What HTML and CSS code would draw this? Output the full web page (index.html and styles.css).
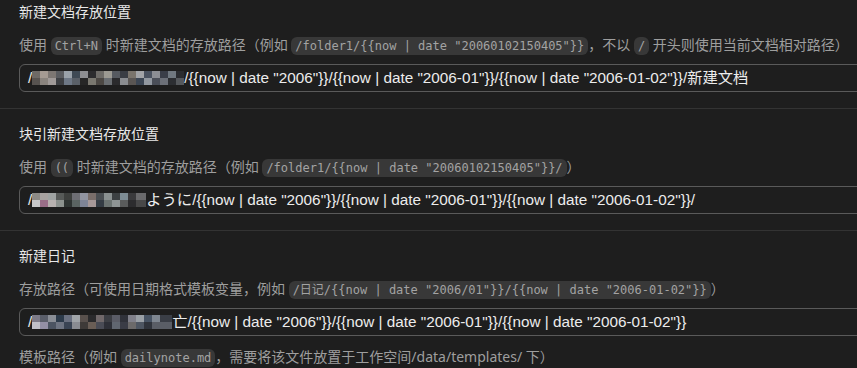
FILE: index.html
```html
<!DOCTYPE html>
<html lang="zh-CN">
<head>
  <meta charset="UTF-8" />
  <meta name="viewport" content="width=device-width, initial-scale=1.0"/>
  <title>设置 - 文档</title>
  <link rel="stylesheet" href="styles.css">
</head>
<body>
  <div class="settings">
    <div class="item">
      <div class="item-title">新建文档存放位置</div>
      <div class="item-desc">使用 <code>Ctrl+N</code> 时新建文档的存放路径（例如 <code>/folder1/{{now | date "20060102150405"}}</code>，不以 <code>/</code> 开头则使用当前文档相对路径）</div>
      <div class="item-input">/<span class="mosaic m1"></span>/{{now | date "2006"}}/{{now | date "2006-01"}}/{{now | date "2006-01-02"}}/新建文档</div>
    </div>

    <div class="item">
      <div class="item-title">块引新建文档存放位置</div>
      <div class="item-desc">使用 <code>((</code> 时新建文档的存放路径（例如 <code>/folder1/{{now | date "20060102150405"}}/</code>）</div>
      <div class="item-input">/<span class="mosaic m2"></span>ように/{{now | date "2006"}}/{{now | date "2006-01"}}/{{now | date "2006-01-02"}}/</div>
    </div>

    <div class="item last">
      <div class="item-title">新建日记</div>
      <div class="item-desc">存放路径（可使用日期格式模板变量，例如 <code>/日记/{{now | date "2006/01"}}/{{now | date "2006-01-02"}}</code>）</div>
      <div class="item-input">/<span class="mosaic m3"></span>亡/{{now | date "2006"}}/{{now | date "2006-01"}}/{{now | date "2006-01-02"}}</div>
      <div class="item-desc after">模板路径（例如 <code>dailynote.md</code>，需要将该文件放置于工作空间/data/templates/ 下）</div>
    </div>
  </div>
</body>
</html>
```

FILE: styles.css
```css
body {
  margin: 0;
  background: #1e1e1e;
  overflow: hidden;
  font-family: "Noto Sans", "Noto Sans CJK SC", sans-serif;
}
.settings {
  margin-top: -13px;
}
.item {
  padding: 15px 0 16px 19px;
  border-bottom: 1px solid #333333;
}
.item.last {
  border-bottom: none;
}
.item-title {
  font-size: 14px;
  line-height: 20px;
  color: #e8e8e8;
  margin-bottom: 12px;
}
.item-desc {
  font-size: 14px;
  line-height: 22px;
  color: #9e9e9e;
  white-space: nowrap;
  margin-bottom: 8px;
}
.item-desc.after {
  margin-top: 10px;
}
code {
  font-family: "DejaVu Sans Mono", "Noto Sans CJK SC", monospace;
  font-size: 12px;
  line-height: 15px;
  padding: 2px 4px;
  border-radius: 6px;
  background: #383838;
  color: #a3a3a3;
}
.item-input {
  width: 900px;
  height: 28px;
  box-sizing: border-box;
  border: 1px solid #5a5a5a;
  border-radius: 6px;
  padding: 0 8px;
  font-family: "Liberation Sans", "Noto Sans CJK SC", sans-serif;
  font-size: 15.3px;
  line-height: 26px;
  color: #ececec;
  white-space: nowrap;
}
.mosaic {
  display: inline-block;
  height: 14px;
  vertical-align: -2px;
  background-size: 100% 7px;
  background-repeat: no-repeat;
  background-position: 0 0, 0 7px;
}
.m1 {
  width: 152px;
  background-image:
    linear-gradient(to right, #6e6a66 0 8px, #a59b93 8px 16px, #7d7773 16px 24px, #5a5c60 24px 32px, #9aa2aa 32px 40px, #3f4a55 40px 48px, #8e8f92 48px 56px, #2c2c2e 56px 64px, #6e6c68 64px 72px, #9c9a92 72px 80px, #565a60 80px 88px, #3a3d44 88px 96px, #7a746c 96px 104px, #a2a4a8 104px 112px, #4a5260 112px 120px, #8c8e94 120px 128px, #3a3e48 128px 136px, #707880 136px 144px, #2a2c30 144px 152px),
    linear-gradient(to right, #575350 0 8px, #8a847e 8px 16px, #a09a98 16px 24px, #3e4044 24px 32px, #6e7886 32px 40px, #5a6068 40px 48px, #262626 48px 56px, #7a7870 56px 64px, #4c4844 64px 72px, #6a6e72 72px 80px, #2a2a2c 80px 88px, #8a8c90 88px 96px, #5a5654 96px 104px, #3c4654 104px 112px, #9298a0 112px 120px, #4a4e58 120px 128px, #6c7078 128px 136px, #2c2e32 136px 144px, #55585c 144px 152px);
}
.m2 {
  width: 114px;
  background-image:
    linear-gradient(to right, #8c8a86 0 8px, #a7a2a0 8px 16px, #9fa3a2 16px 24px, #575a58 24px 32px, #3e403e 32px 40px, #6e6e74 40px 48px, #9194a0 48px 56px, #7a6e6a 56px 64px, #4a4e52 64px 72px, #8a9090 72px 80px, #3c4042 80px 88px, #7d8c94 88px 96px, #3a3a3c 96px 104px, #6a6a6c 104px 114px),
    linear-gradient(to right, #c8c8ca 0 8px, #9a6e88 8px 16px, #b8b2b0 16px 24px, #8c928e 24px 32px, #2e3432 32px 40px, #5a6462 40px 48px, #7e8496 48px 56px, #a69898 56px 64px, #343c44 64px 72px, #6c7472 72px 80px, #8e9494 80px 88px, #5a5c5c 88px 96px, #2c2c2e 96px 104px, #484848 104px 114px);
}
.m3 {
  width: 140px;
  background-image:
    linear-gradient(to right, #7c7a88 0 8px, #5a5e6a 8px 16px, #8a8e96 16px 24px, #2c3a4a 24px 32px, #6a7080 32px 40px, #a0a4a8 40px 48px, #58504c 48px 56px, #2a2a2c 56px 64px, #70686a 64px 72px, #3c3e44 72px 80px, #5a5c66 80px 88px, #30323a 88px 96px, #80808a 96px 104px, #9aa0a6 104px 112px, #485464 112px 120px, #7e8690 120px 128px, #3a3e46 128px 140px),
    linear-gradient(to right, #c0c0c8 0 8px, #9490a6 8px 16px, #4c5462 16px 24px, #6e7482 24px 32px, #3a4454 32px 40px, #8a8c92 40px 48px, #3e3a38 48px 56px, #6a5e56 56px 64px, #4a4c56 64px 72px, #2e3038 72px 80px, #606670 80px 88px, #3a3c46 88px 96px, #6c6a6a 96px 104px, #4e5662 104px 112px, #30343c 112px 120px, #5a5e66 120px 140px);
}
```
